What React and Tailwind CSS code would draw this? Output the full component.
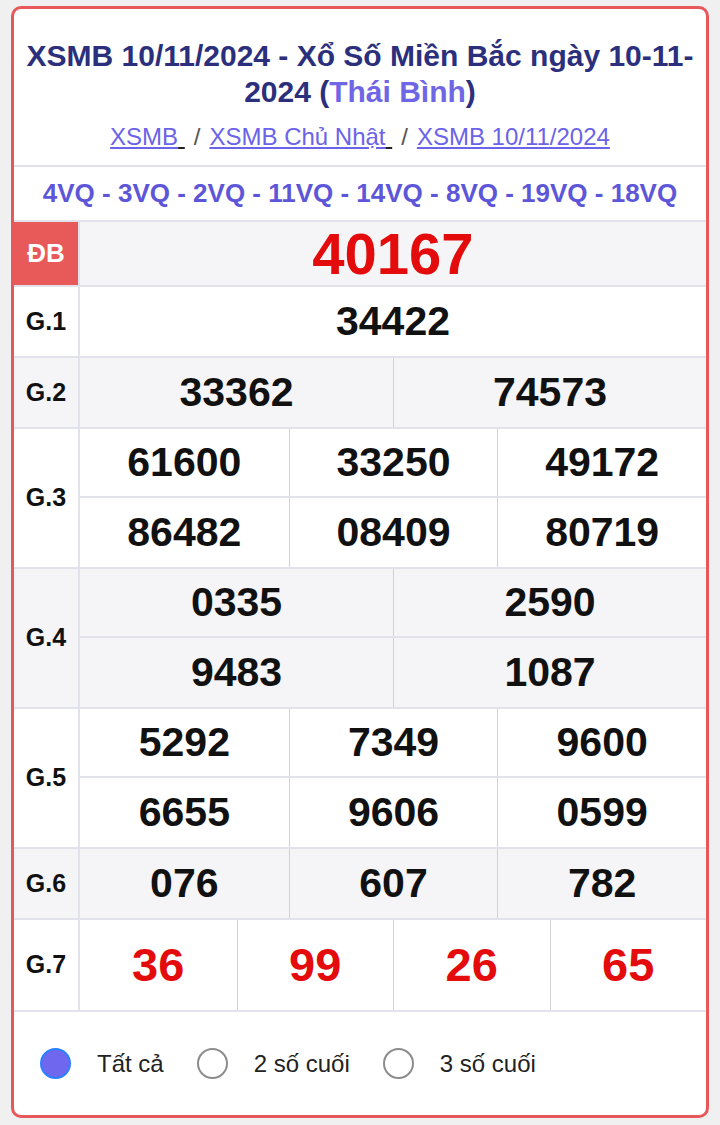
import React from 'react';

const font = { fontFamily: '"Liberation Sans", Arial, sans-serif' };

const groups = [
  { label: 'G.1', cols: 'grid-cols-1', rows: [['34422']], bg: 'bg-white' },
  { label: 'G.2', cols: 'grid-cols-2', rows: [['33362', '74573']], bg: 'bg-[#f5f5f7]' },
  { label: 'G.3', cols: 'grid-cols-3', rows: [['61600', '33250', '49172'], ['86482', '08409', '80719']], bg: 'bg-white' },
  { label: 'G.4', cols: 'grid-cols-2', rows: [['0335', '2590'], ['9483', '1087']], bg: 'bg-[#f5f5f7]' },
  { label: 'G.5', cols: 'grid-cols-3', rows: [['5292', '7349', '9600'], ['6655', '9606', '0599']], bg: 'bg-white' },
  { label: 'G.6', cols: 'grid-cols-3', rows: [['076', '607', '782']], bg: 'bg-[#f5f5f7]' },
];

const PrizeGroup = ({ label, cols, rows, bg }) => (
  <div className={`flex border-b-2 border-[#e2e2ea] ${bg}`}>
    {/* Label column */}
    <div className="w-[66px] shrink-0 flex items-center justify-center border-r-2 border-[#e2e2ea] text-[25px] font-bold text-[#111]">
      {label}
    </div>
    <div className="flex-1 flex flex-col">
      {rows.map((row, i) => (
        <div
          key={i}
          className={`grid ${cols} h-[69px] ${i < rows.length - 1 ? 'border-b-2 border-[#e2e2ea]' : ''}`}
        >
          {row.map((n, j) => (
            <div
              key={j}
              className={`flex items-center justify-center text-[41px] font-bold text-[#111] ${j > 0 ? 'border-l border-[#d2d2d6]' : ''}`}
            >
              {n}
            </div>
          ))}
        </div>
      ))}
    </div>
  </div>
);

const Radio = ({ checked, label }) => (
  <label className="flex items-center gap-[26px]">
    {checked ? (
      <span className="w-[31px] h-[31px] rounded-full bg-[#7067ef] border-2 border-[#2a80ff] block" />
    ) : (
      <span className="w-[31px] h-[31px] rounded-full bg-white border-2 border-[#8c8c8c] block" />
    )}
    <span className="text-[24px] text-[#222]">{label}</span>
  </label>
);

export default function App() {
  return (
    <div className="min-h-[1125px] bg-[#f0f0f1] px-[11px] pt-[6px] pb-[6px]" style={font}>
      <div className="bg-white border-[3px] border-[#e8585b] rounded-[10px] overflow-hidden">
        {/* Title */}
        <div className="pt-[29px] px-0 text-center">
          <h1 className="text-[30px] leading-[36px] font-bold text-[#2b2f7c]">
            XSMB 10/11/2024 - Xổ Số Miền Bắc ngày 10-11-2024 (<span className="text-[#6f66e6]">Thái Bình</span>)
          </h1>
          <div className="mt-[12px] h-[30px] flex items-center justify-center text-[24px] text-[#555]">
            <a className="text-[#6b63e8] underline">XSMB</a>
            <span className="underline decoration-[#222]">&nbsp;</span>
            <span className="mx-[9px]">/</span>
            <a className="text-[#6b63e8] underline">XSMB Chủ Nhật</a>
            <span className="underline decoration-[#222]">&nbsp;</span>
            <span className="mx-[9px]">/</span>
            <a className="text-[#6b63e8] underline">XSMB 10/11/2024</a>
          </div>
        </div>

        {/* Loto codes */}
        <div className="mt-[13px] border-t-2 border-b-2 border-[#e2e2ea] h-[57px] flex items-center justify-center text-[26px] font-bold text-[#5d56d8]">
          4VQ - 3VQ - 2VQ - 11VQ - 14VQ - 8VQ - 19VQ - 18VQ
        </div>

        {/* Special prize */}
        <div className="flex h-[65px] border-b-2 border-[#e2e2ea] bg-[#f5f5f7]">
          <div className="w-[66px] shrink-0 flex items-center justify-center bg-[#e85a5a] text-white text-[26px] font-bold border-r-2 border-[#e2e2ea]">
            ĐB
          </div>
          <div className="flex-1 flex items-center justify-center text-[58px] font-bold text-[#e30b0b]">
            40167
          </div>
        </div>

        {groups.map((g) => (
          <PrizeGroup key={g.label} {...g} />
        ))}

        {/* G.7 */}
        <div className="flex h-[92px] border-b-2 border-[#e2e2ea] bg-white">
          <div className="w-[66px] shrink-0 flex items-center justify-center border-r-2 border-[#e2e2ea] text-[25px] font-bold text-[#111]">
            G.7
          </div>
          <div className="flex-1 grid grid-cols-4">
            {['36', '99', '26', '65'].map((n, j) => (
              <div
                key={n}
                className={`flex items-center justify-center text-[47px] font-bold text-[#e30b0b] ${j > 0 ? 'border-l border-[#d2d2d6]' : ''}`}
              >
                {n}
              </div>
            ))}
          </div>
        </div>

        {/* Filter radios */}
        <div className="h-[103px] flex items-center pl-[26px] gap-[33px]">
          <Radio checked label="Tất cả" />
          <Radio label="2 số cuối" />
          <Radio label="3 số cuối" />
        </div>
      </div>
    </div>
  );
}
